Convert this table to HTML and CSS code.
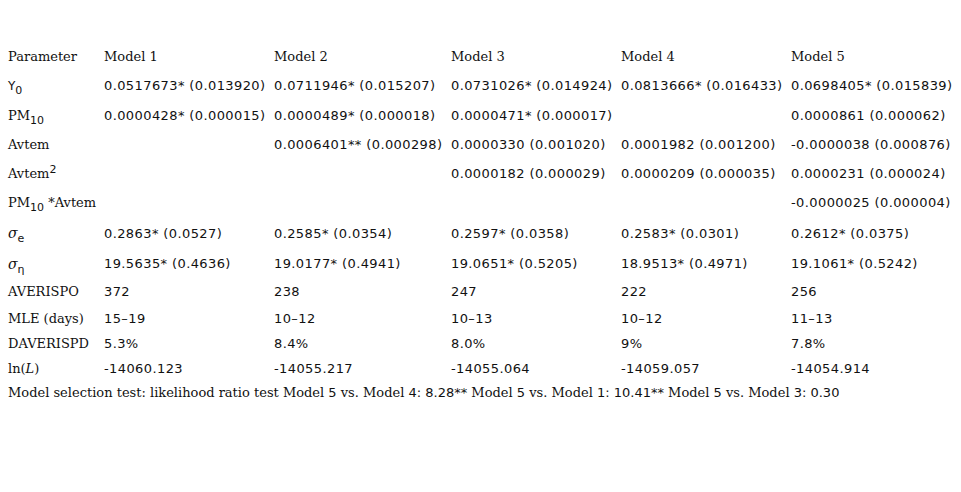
FILE: index.html
```html
<!DOCTYPE html>
<html>
<head>
<meta charset="utf-8">
<link rel="stylesheet" href="styles.css">
</head>
<body>
<table class="results">
  <tr class="r-head"><td class="lab">Parameter</td><td class="lab">Model 1</td><td class="lab">Model 2</td><td class="lab">Model 3</td><td class="lab">Model 4</td><td class="lab">Model 5</td></tr>
  <tr class="r-y0"><td class="lab"><span class="greek">Υ</span><sub class="num">0</sub></td><td>0.0517673* (0.013920)</td><td>0.0711946* (0.015207)</td><td>0.0731026* (0.014924)</td><td>0.0813666* (0.016433)</td><td>0.0698405* (0.015839)</td></tr>
  <tr class="r-pm"><td class="lab">PM<sub class="num">10</sub></td><td>0.0000428* (0.000015)</td><td>0.0000489* (0.000018)</td><td>0.0000471* (0.000017)</td><td></td><td>0.0000861 (0.000062)</td></tr>
  <tr class="r-av"><td class="lab">Avtem</td><td></td><td>0.0006401** (0.000298)</td><td>0.0000330 (0.001020)</td><td>0.0001982 (0.001200)</td><td>-0.0000038 (0.000876)</td></tr>
  <tr class="r-av2"><td class="lab">Avtem<sup class="num">2</sup></td><td></td><td></td><td>0.0000182 (0.000029)</td><td>0.0000209 (0.000035)</td><td>0.0000231 (0.000024)</td></tr>
  <tr class="r-pmav"><td class="lab">PM<sub class="num">10</sub> *Avtem</td><td></td><td></td><td></td><td></td><td>-0.0000025 (0.000004)</td></tr>
  <tr class="r-se"><td class="lab"><span class="sigma">σ</span><sub class="num">e</sub></td><td>0.2863* (0.0527)</td><td>0.2585* (0.0354)</td><td>0.2597* (0.0358)</td><td>0.2583* (0.0301)</td><td>0.2612* (0.0375)</td></tr>
  <tr class="r-sn"><td class="lab"><span class="sigma">σ</span><sub class="num">η</sub></td><td>19.5635* (0.4636)</td><td>19.0177* (0.4941)</td><td>19.0651* (0.5205)</td><td>18.9513* (0.4971)</td><td>19.1061* (0.5242)</td></tr>
  <tr class="r-avs"><td class="lab">AVERISPO</td><td>372</td><td>238</td><td>247</td><td>222</td><td>256</td></tr>
  <tr class="r-mle"><td class="lab">MLE (days)</td><td>15–19</td><td>10–12</td><td>10–13</td><td>10–12</td><td>11–13</td></tr>
  <tr class="r-dav"><td class="lab">DAVERISPD</td><td>5.3%</td><td>8.4%</td><td>8.0%</td><td>9%</td><td>7.8%</td></tr>
  <tr class="r-ln"><td class="lab">ln(<i>L</i>)</td><td>-14060.123</td><td>-14055.217</td><td>-14055.064</td><td>-14059.057</td><td>-14054.914</td></tr>
  <tr class="r-foot"><td class="lab foot" colspan="6">Model selection test: likelihood ratio test Model <span class="num">5</span> vs. Model <span class="num">4: 8.28**</span> Model <span class="num">5</span> vs. Model <span class="num">1: 10.41**</span> Model <span class="num">5</span> vs. Model <span class="num">3: 0.30</span></td></tr>
</table>
</body>
</html>
```
FILE: styles.css
```css
html, body {
  margin: 0;
  padding: 0;
  background: #fff;
  color: #000;
}
body {
  padding: 42px 0 0 8px;
}
.results {
  border-collapse: collapse;
  border-spacing: 0;
  table-layout: fixed;
  width: 953px;
}
.results td {
  padding: 0;
  vertical-align: middle;
  white-space: nowrap;
  font-family: "DejaVu Sans", sans-serif;
  font-size: 13px;
  letter-spacing: 0.4px;
  text-align: left;
  color: #111;
}
.results td:nth-child(1) { width: 96px; }
.results td:nth-child(2) { width: 170px; }
.results td:nth-child(3) { width: 177px; }
.results td:nth-child(4) { width: 170px; }
.results td:nth-child(5) { width: 170px; }
.results td.lab {
  font-family: "DejaVu Serif", serif;
  font-size: 13px;
  letter-spacing: 0;
}
.results td.foot {
  letter-spacing: 0;
}
.num {
  font-family: "DejaVu Sans", sans-serif;
}
.greek {
  font-family: "DejaVu Sans", sans-serif;
  font-size: 12px;
}
.sigma {
  font-family: "DejaVu Serif", serif;
  font-style: italic;
  font-size: 14px;
}
sub, sup {
  font-size: 11px;
  line-height: 0;
}
.r-head td { height: 28px; }
.r-y0 td { height: 30px; }
.r-pm td { height: 30px; }
.r-av td { height: 29px; }
.r-av2 td { height: 28px; }
.r-pmav td { height: 30px; }
.r-se td { height: 32px; }
.r-sn td { height: 29px; }
.r-avs td { height: 27px; }
.r-mle td { height: 26px; }
.r-dav td { height: 25px; }
.r-ln td { height: 24px; }
.r-foot td { height: 25px; }
```
